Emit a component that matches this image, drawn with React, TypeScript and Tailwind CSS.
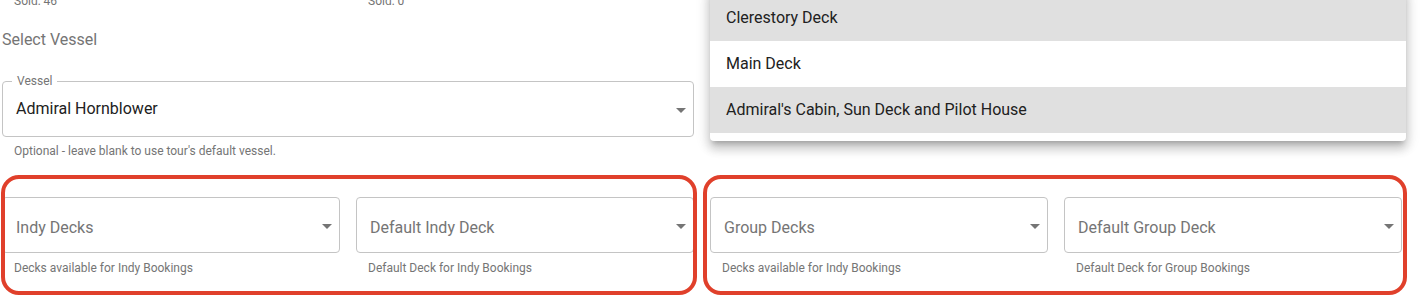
import React from "react";

const Arrow = () => (
  <svg width="10" height="5" viewBox="0 0 10 5" className="absolute right-[7px] top-1/2 -translate-y-[1px]">
    <path d="M0 0l5 5 5-5z" fill="rgba(0,0,0,0.54)" />
  </svg>
);

const EmptySelect = ({ label, helper }: { label: string; helper: string }) => (
  <div className="flex flex-col">
    <div className="relative h-[56px] border border-[#c4c4c4] rounded-[4px] flex items-center px-[13px] pt-[5px]">
      <span className="text-[16px] leading-[24px] text-[#757575]">{label}</span>
      <Arrow />
    </div>
    <div className="mt-[5px] ml-3 text-[12px] leading-[20px] text-[#757575]">{helper}</div>
  </div>
);

export default function App() {
  return (
    <div
      className="relative w-[1424px] h-[298px] overflow-hidden bg-white"
      style={{ fontFamily: "Roboto, 'Noto Sans', Arial, sans-serif" }}
    >
      <div className="px-[2px] w-[1404px]">
        <div className="grid grid-cols-4 gap-x-4 -mt-[7px] text-[12px] leading-[16px] text-[#757575]">
          <div className="pl-3">Sold: 46</div>
          <div className="pl-3">Sold: 0</div>
        </div>
        <div className="grid grid-cols-2 gap-x-4">
          <div className="flex flex-col">
            <div className="mt-[19px] text-[16px] leading-[24px] text-[#757575]">Select Vessel</div>
            <div className="relative mt-[29px] h-[56px] border border-[#c4c4c4] rounded-[4px] flex items-center px-[13px]">
              <span className="absolute -top-[9px] left-[9px] px-[5px] bg-white text-[12px] leading-[16px] text-[#757575]">
                Vessel
              </span>
              <span className="text-[16px] leading-[24px] text-[#212121]">Admiral Hornblower</span>
              <Arrow />
            </div>
            <div className="mt-[4px] ml-3 text-[12px] leading-[20px] text-[#757575]">
              Optional - leave blank to use tour's default vessel.
            </div>
          </div>
          <div />
        </div>
        <div className="grid grid-cols-4 gap-x-4 mt-[36px]">
          <EmptySelect label="Indy Decks" helper="Decks available for Indy Bookings" />
          <EmptySelect label="Default Indy Deck" helper="Default Deck for Indy Bookings" />
          <EmptySelect label="Group Decks" helper="Decks available for Indy Bookings" />
          <EmptySelect label="Default Group Deck" helper="Default Deck for Group Bookings" />
        </div>
      </div>

      {/* dropdown menu popover */}
      <div className="absolute left-[710px] top-[-13px] w-[696px] bg-white rounded-[4px] py-2 z-10 shadow-[0px_5px_5px_-3px_rgba(0,0,0,0.2),0px_8px_10px_1px_rgba(0,0,0,0.14),0px_3px_14px_2px_rgba(0,0,0,0.12)]">
        <div className="h-[46px] flex items-center px-4 bg-[#e0e0e0] text-[16px] leading-[24px] text-[#212121]">Clerestory Deck</div>
        <div className="h-[46px] flex items-center px-4 bg-white text-[16px] leading-[24px] text-[#212121]">Main Deck</div>
        <div className="h-[46px] flex items-center px-4 bg-[#e0e0e0] text-[16px] leading-[24px] text-[#212121]">
          Admiral's Cabin, Sun Deck and Pilot House
        </div>
      </div>

      {/* red annotation boxes */}
      <div className="absolute left-[1px] top-[175px] w-[696px] h-[120px] border-[4px] border-[#e0402b] rounded-[18px] z-20" />
      <div className="absolute left-[703px] top-[175px] w-[704px] h-[120px] border-[4px] border-[#e0402b] rounded-[18px] z-20" />
    </div>
  );
}
